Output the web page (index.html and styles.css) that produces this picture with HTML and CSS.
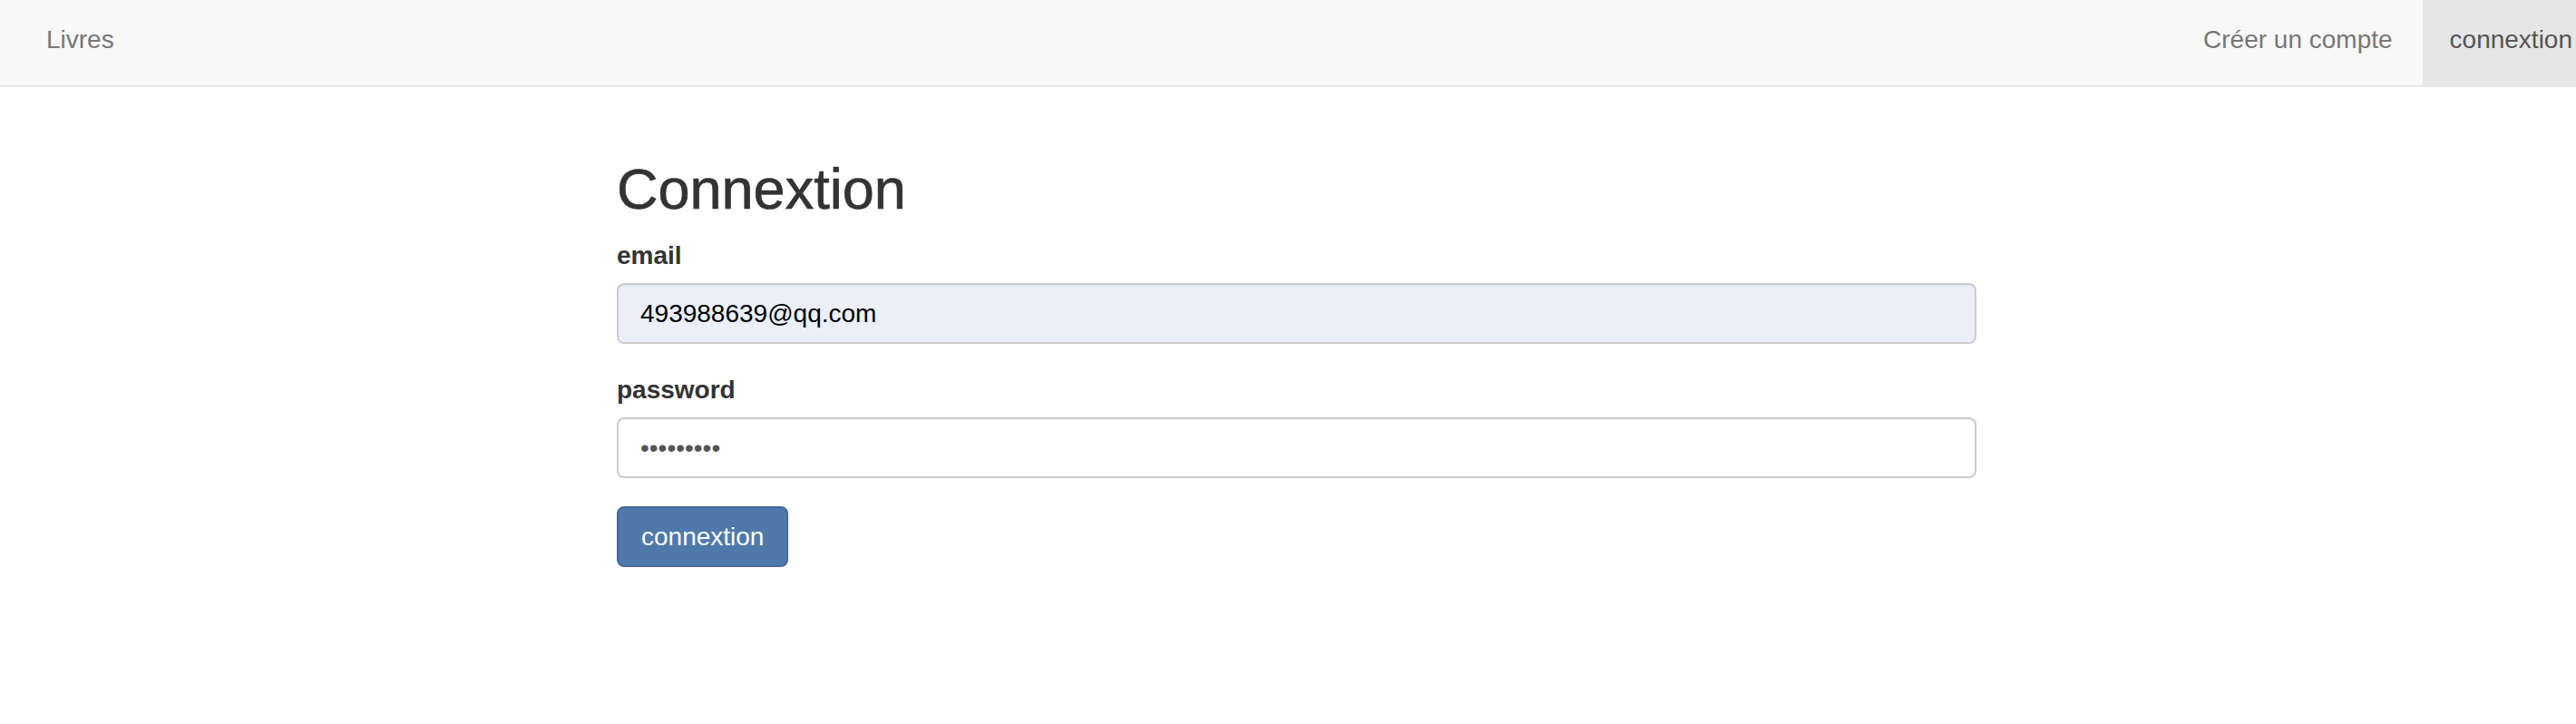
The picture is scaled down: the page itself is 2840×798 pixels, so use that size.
FILE: index.html
```html
<!DOCTYPE html>
<html lang="fr">
<head>
<meta charset="utf-8">
<title>Connexion</title>
<link rel="stylesheet" href="styles.css">
</head>
<body>
<nav class="navbar">
  <ul class="nav nav-left">
    <li><a class="nav-link" href="#">Livres</a></li>
  </ul>
  <ul class="nav nav-right">
    <li><a class="nav-link" href="#">Créer un compte</a></li>
    <li><a class="nav-link active" href="#">connextion</a></li>
  </ul>
</nav>
<main class="container">
  <h1 class="title">Connextion</h1>
  <form class="login-form">
    <div class="form-group">
      <label class="form-label" for="email">email</label>
      <input class="form-control autofilled" id="email" type="text" value="493988639@qq.com">
    </div>
    <div class="form-group">
      <label class="form-label" for="password">password</label>
      <input class="form-control" id="password" type="password" value="123456789">
    </div>
    <button class="btn-primary" type="button">connextion</button>
  </form>
</main>
</body>
</html>
```
FILE: styles.css
```css
html, body {
  margin: 0;
  padding: 0;
  background: #fff;
}
body {
  font-family: "Liberation Sans", Arial, Helvetica, sans-serif;
  font-size: 28px;
  line-height: 40px;
  color: #333;
}
.navbar {
  display: flex;
  justify-content: space-between;
  height: 94px;
  background: #f8f8f8;
  border-bottom: 2px solid #e7e7e7;
  padding-left: 21px;
}
.nav {
  display: flex;
  list-style: none;
  margin: 0;
  padding: 0;
}
.nav-link {
  display: block;
  height: 94px;
  box-sizing: border-box;
  padding: 24px 30px 30px;
  line-height: 40px;
  color: #777;
  text-decoration: none;
}
.nav-right .nav-link {
  padding-left: 28px;
  padding-right: 33px;
}
.nav-right .nav-link.active {
  background: #e6e6e6;
  color: #555;
  padding-left: 30px;
  padding-right: 4px;
}
.container {
  width: 1499px;
  margin-left: 680px;
}
.title {
  font-size: 63px;
  font-weight: 400;
  line-height: 69px;
  margin: 78px 0 19px;
  color: #333;
  -webkit-text-stroke: 0.7px #333;
}
.form-group {
  margin-bottom: 31px;
}
.form-label {
  display: block;
  font-weight: 700;
  line-height: 40px;
  margin-bottom: 10px;
  color: #333;
}
.form-control {
  display: block;
  width: 100%;
  height: 67px;
  box-sizing: border-box;
  padding: 12px 24px;
  border: 2px solid #cccccc;
  border-radius: 8px;
  font-family: "Liberation Sans", Arial, Helvetica, sans-serif;
  font-size: 28px;
  line-height: 40px;
  color: #555;
  background: #fff;
  outline: none;
  box-shadow: inset 0 1px 1px rgba(0,0,0,.05);
}
.form-control.autofilled {
  background: #eaeffa;
  color: #000;
}
.btn-primary {
  display: block;
  height: 67px;
  box-sizing: border-box;
  padding: 12px 25px;
  border: 2px solid #46699a;
  border-radius: 8px;
  background: #4f79ab;
  color: #fff;
  font-family: "Liberation Sans", Arial, Helvetica, sans-serif;
  font-size: 28px;
  line-height: 40px;
  cursor: pointer;
}
```
